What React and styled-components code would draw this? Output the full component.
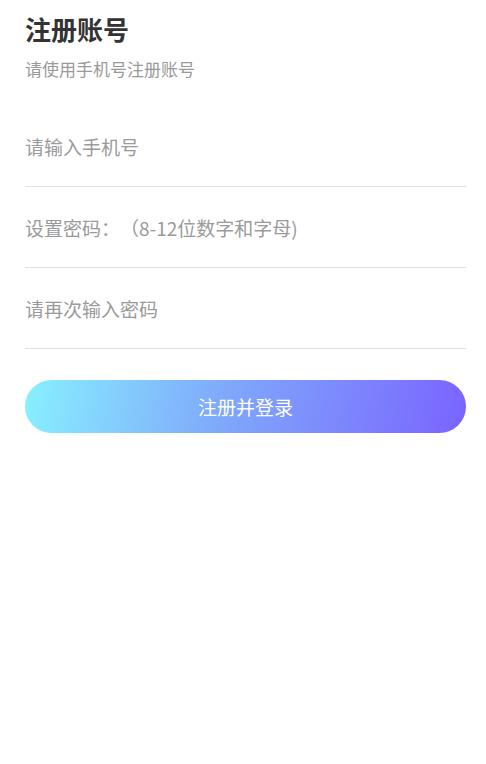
import React, { Component } from "react";
import styled, { createGlobalStyle } from "styled-components";

const GlobalStyle = createGlobalStyle`
  body {
    margin: 0;
    background: #fff;
    font-family: "Noto Sans CJK SC", "Noto Sans", sans-serif;
  }
`;

const Page = styled.div`
  padding: 10px 20px 0 25px;
  display: flex;
  flex-direction: column;
`;

const Title = styled.h1`
  margin: 0;
  font-size: 26px;
  font-weight: 700;
  line-height: 38px;
  color: #333;
`;

const Subtitle = styled.div`
  margin-top: 10px;
  font-size: 17px;
  line-height: 22px;
  color: #999;
`;

const Form = styled.div`
  margin-top: 26px;
  display: flex;
  flex-direction: column;
`;

const Field = styled.input`
  height: 80px;
  border: none;
  border-bottom: 1px solid #e0e0e0;
  padding: 0;
  outline: none;
  font-family: inherit;
  font-size: 19px;
  color: #333;
  background: transparent;
  text-spacing-trim: space-all;

  &::placeholder {
    color: #9a9a9a;
    text-spacing-trim: space-all;
  }
`;

const SubmitButton = styled.button`
  margin-top: 31px;
  height: 53px;
  border: none;
  border-radius: 27px;
  background: linear-gradient(100deg, #88f0ff 0%, #7fa8fb 45%, #7a64ff 100%);
  color: #fff;
  font-family: inherit;
  font-size: 19px;
  cursor: pointer;
`;

class App extends Component {
  render() {
    const fields = [
      { type: "tel", placeholder: "请输入手机号" },
      { type: "password", placeholder: "设置密码：（8-12位数字和字母)" },
      { type: "password", placeholder: "请再次输入密码" }
    ];
    return (
      <Page>
        <GlobalStyle />
        <Title>注册账号</Title>
        <Subtitle>请使用手机号注册账号</Subtitle>
        <Form>
          {fields.map((field, index) => (
            <Field key={index} type={field.type} placeholder={field.placeholder} />
          ))}
          <SubmitButton>注册并登录</SubmitButton>
        </Form>
      </Page>
    );
  }
}

export default App;
